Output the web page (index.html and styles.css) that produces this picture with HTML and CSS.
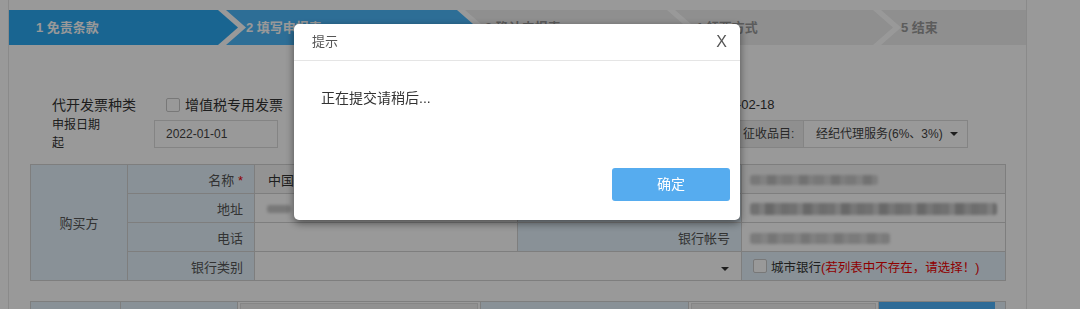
FILE: index.html
```html
<!DOCTYPE html>
<html lang="zh-CN">
<head>
<meta charset="utf-8">
<title>代开发票申报</title>
<link rel="stylesheet" href="styles.css">
</head>
<body>
<div class="page">
  <div class="steps">
    <div class="step s1">1&nbsp;免责条款</div>
    <div class="step s2">2&nbsp;填写申报表</div>
    <div class="step s3">3&nbsp;确认申报表</div>
    <div class="step s4">4&nbsp;领票方式</div>
    <div class="step s5">5&nbsp;结束</div>
  </div>

  <div class="form">
    <div class="frow r1">
      <div class="fa">
        <span class="lbl14">代开发票种类</span>
        <span class="chk"></span>
        <span class="txt14">增值税专用发票</span>
      </div>
      <div class="fb">
        <span class="chk"></span>
        <span class="txt14">增值税普通发票</span>
      </div>
      <div class="fc">
        <span class="lbl12 w68">申报日期止</span>
        <span class="date">2022-02-18</span>
      </div>
    </div>
    <div class="frow r2">
      <div class="fa">
        <span class="lbl12 wrap">申报日期起</span>
        <span class="inp">2022-01-01</span>
      </div>
      <div class="fb"></div>
      <div class="fc cat">
        <span class="addon">征收品目:</span>
        <span class="sel">经纪代理服务(6%、3%)<i class="caret"></i></span>
      </div>
    </div>
  </div>

  <table class="grid buyer">
    <colgroup>
      <col class="c1"><col class="c2"><col class="c3"><col class="c4"><col class="c5">
    </colgroup>
    <tr>
      <td class="hd center" rowspan="4">购买方</td>
      <td class="hd">名称 <span class="req">*</span></td>
      <td class="ro"><span class="val">中国某某有限公司</span></td>
      <td class="hd">纳税人识别号 <span class="req">*</span></td>
      <td class="ro pad8"><span class="blur b1"></span></td>
    </tr>
    <tr>
      <td class="hd">地址</td>
      <td class="pad12"><span class="blur b4"></span></td>
      <td class="hd">开户银行</td>
      <td class="pad8"><span class="blur b2"></span></td>
    </tr>
    <tr>
      <td class="hd">电话</td>
      <td></td>
      <td class="hd">银行帐号</td>
      <td class="pad8"><span class="blur b3"></span></td>
    </tr>
    <tr>
      <td class="hd">银行类别</td>
      <td colspan="2" class="selcell"><i class="caret"></i></td>
      <td class="hd2">
        <span class="chk"></span><span class="city">城市银行</span><span class="warn">(若列表中不存在，请选择！)</span>
      </td>
    </tr>
  </table>

  <table class="grid seller">
    <colgroup>
      <col class="d1"><col class="d2"><col class="d3"><col class="d4"><col class="d5"><col class="d6">
    </colgroup>
    <tr>
      <td class="hd"></td>
      <td class="hd"></td>
      <td class="incell"><span class="rinp"></span></td>
      <td class="hd"></td>
      <td class="incell"><span class="rinp"></span></td>
      <td class="hd btncell"><span class="qbtn"></span></td>
    </tr>
  </table>
</div>

<div class="mask"></div>

<div class="modal">
  <div class="mhead">
    <span class="mtitle">提示</span>
    <span class="mclose">X</span>
  </div>
  <div class="mbody">正在提交请稍后...</div>
  <div class="mfoot"><span class="okbtn">确定</span></div>
</div>
</body>
</html>
```

FILE: styles.css
```css
* { box-sizing: border-box; }
html, body { margin: 0; padding: 0; }
body {
  font-family: "Liberation Sans", "Noto Sans CJK SC", sans-serif;
  color: #333;
  background: #fff;
  width: 1080px;
  height: 309px;
  overflow: hidden;
}

.page {
  margin-left: 8px;
  width: 1019px;
  height: 309px;
  overflow: hidden;
  border-left: 1px solid #e6e6e6;
  border-right: 1px solid #e6e6e6;
  padding-top: 10px;
}

/* ---- steps ---- */
.steps { display: flex; height: 35px; }
.step {
  flex: none;
  height: 35px;
  line-height: 35px;
  font-size: 13px;
  font-weight: bold;
  color: #999;
  background: #eee;
  padding-left: 20px;
  white-space: nowrap;
  overflow: hidden;
  margin-left: -12px;
  clip-path: polygon(0 0, calc(100% - 20px) 0, 100% 50%, calc(100% - 20px) 100%, 0 100%, 20px 50%);
}
.s1 {
  width: 229px;
  margin-left: 0;
  padding-left: 27px;
  background: #2aa8f2;
  color: #fff;
  clip-path: polygon(0 0, calc(100% - 20px) 0, 100% 50%, calc(100% - 20px) 100%, 0 100%);
}
.s2 { width: 251px; background: #4cb8fb; color: #fff; }
.s3 { width: 222px; }
.s4 { width: 218px; }
.s5 {
  flex: 1;
  clip-path: polygon(0 0, 100% 0, 100% 100%, 0 100%, 20px 50%);
}

/* ---- form ---- */
.form { padding-left: 43px; }
.frow { display: flex; align-items: center; white-space: nowrap; }
.r1 { margin-top: 50px; height: 20px; }
.r2 { margin-top: 1px; height: 36px; }
.fa { width: 240px; display: flex; align-items: center; flex: none; }
.fb { width: 348px; display: flex; align-items: center; flex: none; padding-left: 40px; }
.fc { display: flex; align-items: center; flex: none; }

.lbl14 { font-size: 14px; line-height: 20px; width: 114px; flex: none; color: #333; }
.txt14 { font-size: 14px; line-height: 20px; color: #333; margin-left: 5px; }
.lbl12 { font-size: 12px; line-height: 18px; color: #333; flex: none; }
.w68 { width: 68px; }
.wrap { width: 50px; margin-right: 52px; white-space: normal; }
.date { font-size: 13px; line-height: 20px; color: #333; }

.chk {
  display: inline-block;
  width: 14px;
  height: 14px;
  border: 1px solid #c8c8c8;
  border-radius: 2px;
  background: #fff;
  flex: none;
}

.inp {
  width: 124px;
  height: 28px;
  flex: none;
  border: 1px solid #dcdcdc;
  padding-left: 11px;
  font-size: 12px;
  line-height: 26px;
  color: #444;
}

.cat { margin-left: 93px; }
.addon {
  width: 70px;
  height: 28px;
  border: 1px solid #dcdcdc;
  border-right: none;
  background: #eee;
  font-size: 12px;
  line-height: 26px;
  padding-left: 9px;
  color: #444;
}
.sel {
  width: 165px;
  height: 28px;
  border: 1px solid #dcdcdc;
  font-size: 12px;
  line-height: 26px;
  padding-left: 12px;
  color: #444;
  display: flex;
  align-items: center;
}
.sel .caret { margin-left: 7px; }
.caret {
  display: inline-block;
  width: 0;
  height: 0;
  border-left: 4px solid transparent;
  border-right: 4px solid transparent;
  border-top: 4px solid #333;
}

/* ---- tables ---- */
.grid {
  border-collapse: collapse;
  table-layout: fixed;
  width: 975px;
  margin-left: 21px;
  font-size: 13px;
  color: #333;
}
.grid td {
  border: 1px solid #d2d2d2;
  height: 29px;
  padding: 0;
  white-space: nowrap;
  overflow: hidden;
}
.buyer { margin-top: 12px; }
.c1 { width: 97px; } .c2 { width: 127px; } .c3 { width: 263px; } .c4 { width: 224px; } .c5 { width: 264px; }
.hd { background: #e4f2fc; text-align: right; padding-right: 11px !important; color: #555; }
.hd.center { text-align: center; padding-right: 0 !important; }
.hd2 { background: #e4f2fc; padding-left: 11px !important; font-size: 12.5px; }
.hd2 .chk { vertical-align: middle; }
.city { margin-left: 4px; vertical-align: middle; color: #333; }
.warn { color: #e00; vertical-align: middle; }
.req { color: #e00; }
.ro { background: #f6f6f6; }
.val { padding-left: 13px; font-size: 13px; }
.pad8 { padding-left: 8px !important; }
.pad12 { padding-left: 12px !important; }
.selcell { text-align: right; padding-right: 12px !important; }

.blur {
  display: inline-block;
  vertical-align: middle;
  filter: blur(1.5px);
  border-radius: 3px;
}
.b1 {
  width: 128px; height: 10px;
  background: repeating-linear-gradient(90deg, #c8c8c8 0 10px, #d8d8d8 10px 17px, #bdbdbd 17px 26px, #d2d2d2 26px 32px);
}
.b2 {
  width: 247px; height: 12px;
  background: repeating-linear-gradient(90deg, #bcbcbc 0 9px, #d2d2d2 9px 15px, #aeaeae 15px 24px, #c6c6c6 24px 31px, #b6b6b6 31px 38px);
}
.b3 {
  width: 140px; height: 11px;
  background: repeating-linear-gradient(90deg, #cdcdcd 0 11px, #dadada 11px 18px, #c4c4c4 18px 27px, #d6d6d6 27px 33px);
}
.b4 {
  width: 24px; height: 8px;
  background: #c8c8c8;
}

.seller { margin-top: 20px; }
.d1 { width: 90px; } .d2 { width: 117px; } .d3 { width: 243px; } .d4 { width: 208px; } .d5 { width: 190px; } .d6 { width: 127px; }
.incell { padding: 1px 2px !important; }
.rinp {
  display: block;
  height: 27px;
  background: #f2f2f2;
  border: 1px solid #e0e0e0;
}
.btncell { padding: 0 !important; text-align: left; }
.qbtn {
  display: block;
  width: 116px;
  height: 29px;
  background: #4cb2fc;
}

/* ---- modal ---- */
.mask {
  position: fixed;
  left: 0; top: 0; right: 0; bottom: 0;
  background: rgba(0, 0, 0, 0.4);
}
.modal {
  position: fixed;
  left: 294px;
  top: 24px;
  width: 446px;
  height: 196px;
  background: #fff;
  border-radius: 5px;
  box-shadow: 0 3px 9px rgba(0, 0, 0, 0.5);
  display: flex;
  flex-direction: column;
}
.mhead {
  height: 37px;
  border-bottom: 1px solid #e5e5e5;
  display: flex;
  align-items: center;
  justify-content: space-between;
  padding: 0 13px 0 18px;
  flex: none;
}
.mtitle { font-size: 13px; color: #555; line-height: 36px; }
.mclose { font-size: 16px; color: #555; line-height: 36px; }
.mbody {
  flex: 1;
  padding: 27px 27px 0;
  font-size: 14px;
  line-height: 20px;
  color: #333;
}
.mfoot {
  display: flex;
  justify-content: flex-end;
  padding: 0 10px 19px;
}
.okbtn {
  width: 118px;
  height: 33px;
  line-height: 33px;
  text-align: center;
  background: #56acef;
  color: #fff;
  font-size: 14px;
  border-radius: 3px;
}
```
